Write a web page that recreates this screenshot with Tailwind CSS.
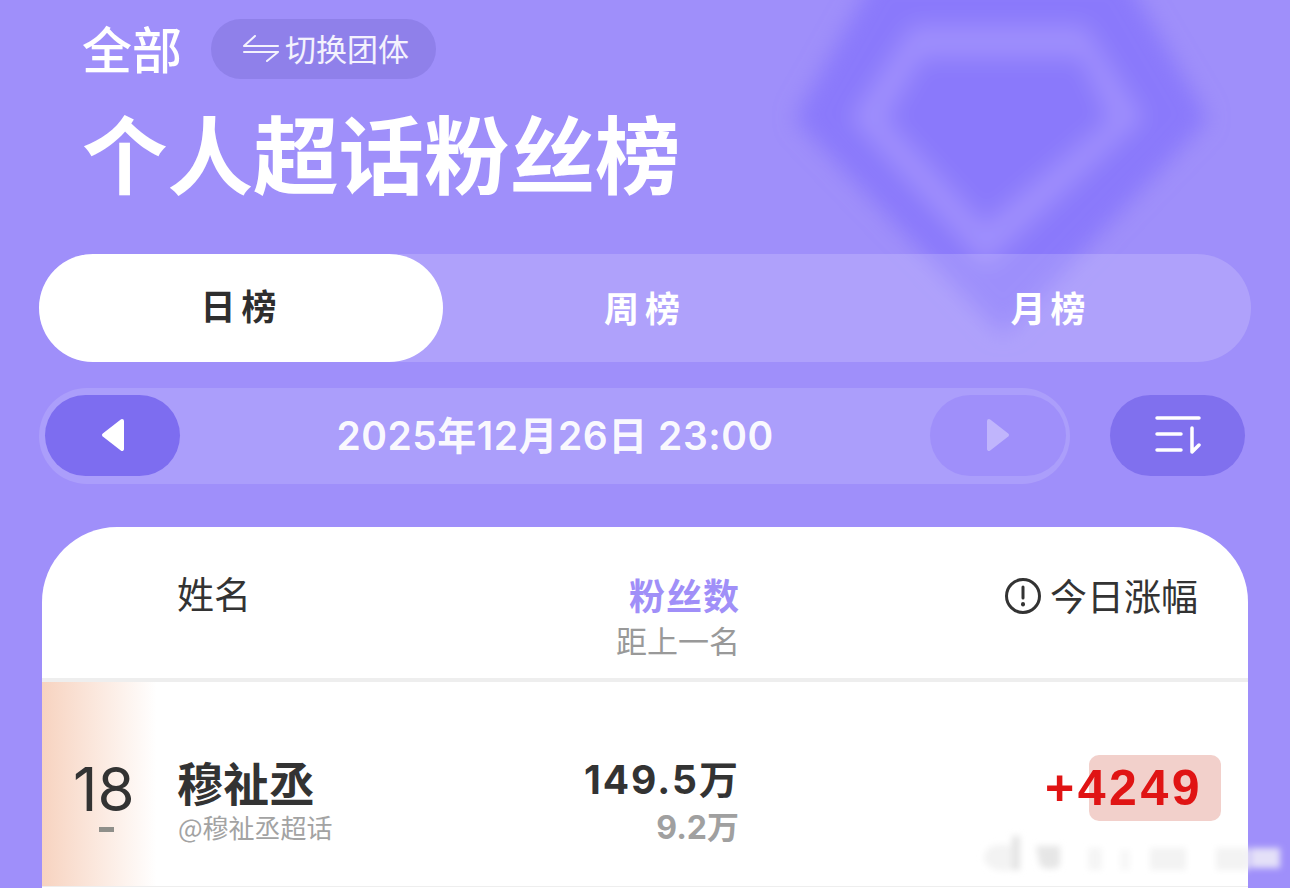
<!DOCTYPE html>
<html>
<head>
  <meta charset="UTF-8" />
  <title>个人超话粉丝榜</title>
  <script src="https://cdn.jsdelivr.net/npm/@tailwindcss/browser@4"></script>
</head>
<body class="bg-[#9f8ffa] h-[888px] overflow-hidden font-['Noto_Sans_CJK_SC',sans-serif]">
  <div class="relative h-[888px] overflow-hidden">

    <!-- background diamond -->
    <svg class="absolute left-0 top-0" width="1290" height="362" viewBox="0 0 1290 362">
      <defs>
        <filter id="soft" x="-20%" y="-20%" width="140%" height="140%"><feGaussianBlur stdDeviation="11" /></filter>
      </defs>
      <g filter="url(#soft)" stroke-linejoin="round">
        <path d="M880 -18 L1120 -18 L1200 118 L1003 326 L803 118 Z" fill="#8a79fb" stroke="#8a79fb" stroke-width="14" />
        <path d="M915 30 L1082 30 L1138 118 L985 260 L856 118 Z" fill="#9f8ffd" stroke="#9f8ffd" stroke-width="8" />
        <path d="M925 62 L1078 62 L1104 118 L985 218 L892 118 Z" fill="#8a79fb" stroke="#8a79fb" stroke-width="10" />
      </g>
    </svg>

    <div class="relative">
      <!-- title -->
      <div class="flex items-center h-[60px] mt-[19px] ml-[82px]">
        <div class="text-[50px] leading-none font-medium text-white pb-[4px]">全部</div>
        <div class="ml-[29px] w-[225px] h-[60px] rounded-full bg-[#8f80ea] flex items-center pl-[32px] text-white/90">
          <svg width="36" height="28" viewBox="0 0 36 28" fill="none" stroke="currentColor" stroke-width="2" stroke-linecap="round" stroke-linejoin="round">
            <path d="M1 11 L35 11 M1 11 L12 1" />
            <path d="M1 17 L35 17 M35 17 L24 26" />
          </svg>
          <span class="ml-[6px] text-[31px] leading-none pb-[3px]">切换团体</span>
        </div>
      </div>
      <h1 class="mt-[22px] ml-[82px] text-[85.5px] leading-[100px] font-bold text-white">个人超话粉丝榜</h1>

      <!-- tabs -->
      <div class="mt-[53px] mx-[39px] h-[108px] rounded-[54px] bg-white/[0.17] flex">
        <div class="w-[404px] h-[108px] rounded-[54px] bg-white flex items-center justify-center pb-[6px] pl-[1px] text-[35px] font-bold tracking-[6px] text-[#2e2e2e]">日榜</div>
        <div class="w-[400px] flex items-center justify-center pb-[1px] pl-[4px] text-[35px] font-bold tracking-[6px] text-white">周榜</div>
        <div class="w-[408px] flex items-center justify-center pb-[1px] pl-[7px] text-[35px] font-bold tracking-[5px] text-white">月榜</div>
      </div>

      <!-- date -->
      <div class="mt-[26px] ml-[39px] flex items-center">
        <div class="w-[1031px] h-[96px] rounded-[48px] bg-white/[0.13] flex items-center justify-between pl-[6px] pr-[4px]">
          <div class="w-[135px] h-[81px] mb-[2px] rounded-[41px] bg-[#7d6df0] flex items-center justify-center">
            <svg width="24" height="34" viewBox="0 0 24 34"><path d="M21 3 L3 17 L21 31 Z" fill="#fff" stroke="#fff" stroke-width="4" stroke-linejoin="round" /></svg>
          </div>
          <div class="font-['Inter','Noto_Sans_CJK_SC',sans-serif] text-[39px] font-semibold text-white/95 tracking-[0.5px]">2025年12月26日 23:00</div>
          <div class="w-[136px] h-[81px] mb-[2px] rounded-[41px] bg-[#9f8ffa] flex items-center justify-center">
            <svg width="24" height="34" viewBox="0 0 24 34"><path d="M3 3 L21 17 L3 31 Z" fill="#c0b5fc" stroke="#c0b5fc" stroke-width="4" stroke-linejoin="round" /></svg>
          </div>
        </div>
        <div class="ml-[40px] w-[135px] h-[81px] mb-[2px] rounded-[41px] bg-[#8070ee] flex items-center justify-center">
          <svg width="46" height="40" viewBox="0 0 46 40" fill="none" stroke="#fff" stroke-width="3.5" stroke-linecap="round" stroke-linejoin="round">
            <path d="M2 3 H44" />
            <path d="M2 19 H26" />
            <path d="M2 35 H26" />
            <path d="M37 13 V37 L44 30" />
          </svg>
        </div>
      </div>

      <!-- card -->
      <div class="mt-[43px] mx-[42px] w-[1206px] h-[400px] bg-white rounded-t-[75px]">
        <div class="relative h-[155px] border-b-4 border-[#eeeeee]">
          <div class="absolute left-[135px] top-[42px] text-[37px] leading-[48px] text-[#333]">姓名</div>
          <div class="absolute right-[508px] top-[43px] text-right">
            <div class="text-[36px] leading-[48px] font-bold tracking-[1px] text-[#a08ff8]">粉丝数</div>
            <div class="text-[31px] leading-[44px] text-[#999]">距上一名</div>
          </div>
          <div class="absolute right-[50px] top-[44px] flex items-center text-[#333]">
            <svg class="mt-[2px]" width="38" height="38" viewBox="0 0 38 38" fill="none" stroke="currentColor" stroke-width="3" stroke-linecap="round">
              <circle cx="19" cy="19" r="16.5" />
              <path d="M19 10 V21" />
              <path d="M19 27 V27.5" stroke-width="4" />
            </svg>
            <span class="ml-[8px] text-[37px] leading-[48px]">今日涨幅</span>
          </div>
        </div>
        <div class="relative h-[205px] border-b border-[#eeeeee] bg-gradient-to-r from-[#f7d3c0] from-0% to-white to-[9.5%]">
          <div class="absolute left-[31px] top-[77px] font-['Inter',sans-serif] text-[60px] leading-[60px] font-normal text-[#333]">18</div>
          <div class="absolute left-[57px] top-[145px] w-[15px] h-[5px] bg-[#8f8f8a]"></div>
          <div class="absolute left-[135px] top-[74px] text-[46px] leading-[50px] font-bold text-[#333]">穆祉丞</div>
          <div class="absolute left-[136px] top-[130px] text-[26px] leading-[30px] text-[#a3a3a3]">@穆祉丞超话</div>
          <div class="absolute right-[508px] top-[73px] font-['Inter','Noto_Sans_CJK_SC',sans-serif] text-[39px] leading-[50px] font-bold tracking-[2px] text-[#333]">149.5万</div>
          <div class="absolute right-[509px] top-[124px] font-['Inter','Noto_Sans_CJK_SC',sans-serif] text-[32px] leading-[44px] font-bold text-[#a0a0a0]">9.2万</div>
          <div class="absolute left-[1047px] top-[73px] w-[132px] h-[66px] rounded-[10px] bg-[#f2d0cb]"></div>
          <div class="absolute right-[45px] top-[76px] font-['Liberation_Sans',sans-serif] text-[50px] leading-[60px] font-bold tracking-[3.5px] text-[#e01414]">+4249</div>
        </div>
      </div>
    </div>

    <!-- blurred watermark -->
    <svg class="absolute left-0 top-0 pointer-events-none" width="1290" height="888" viewBox="0 0 1290 888">
      <defs>
        <filter id="smear" x="-10%" y="-30%" width="120%" height="160%"><feGaussianBlur stdDeviation="3" /></filter>
      </defs>
      <g filter="url(#smear)">
        <path d="M984 860 Q984 845 1000 845 L1012 845 V870 Q990 873 984 860 Z" fill="#f3f3f3" />
        <rect x="1012" y="836" width="8" height="34" fill="#e4e4e4" />
        <path d="M1036 846 H1060 V866 Q1050 872 1040 866 Z" fill="#e6e6e6" />
        <rect x="1088" y="848" width="14" height="22" fill="#f5f5f5" />
        <rect x="1120" y="850" width="10" height="20" fill="#f7f7f7" />
        <rect x="1150" y="848" width="36" height="22" fill="#f3f3f3" />
        <rect x="1216" y="848" width="32" height="22" fill="#f3f3f3" />
        <rect x="1250" y="848" width="30" height="20" fill="#e4e0f8" />
      </g>
    </svg>
  </div>
</body>
</html>
